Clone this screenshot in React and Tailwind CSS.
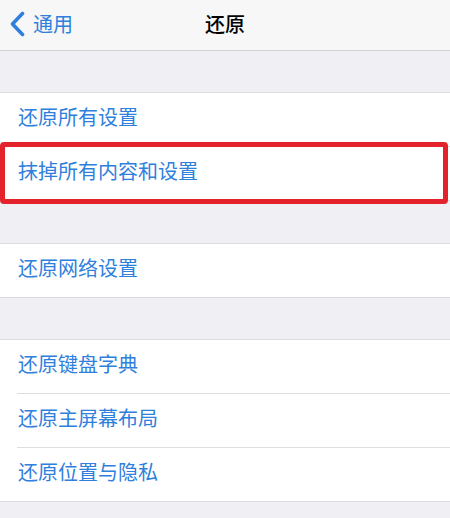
import React from "react";

const font = { fontFamily: '"Noto Sans CJK SC", "Noto Sans", sans-serif' };

function Row({ label, sep }) {
  return (
    <div className="bg-white">
      <div className="h-[53px] flex items-center pl-[18px] pb-[5px] text-[20px] leading-none text-[#2f80dc]">
        {label}
      </div>
      {sep && <div className="ml-[17px] h-px bg-[#dedee2]" />}
    </div>
  );
}

export default function App() {
  return (
    <div className="w-[450px] h-[518px] bg-[#efeff4] overflow-hidden" style={font}>
      <div className="h-[51px] bg-[#f7f7f8] border-b border-[#d4d4d8] relative flex items-center">
        <div className="flex items-center pl-[9px] gap-[8px] text-[#2f80dc] text-[20px] leading-none pb-[2px]">
          <svg width="16" height="26" viewBox="0 0 16 26" fill="none">
            <path d="M13.5 2.5 L3.5 13 L13.5 23.5" stroke="#2f80dc" strokeWidth="3.6" strokeLinecap="round" strokeLinejoin="round" />
          </svg>
          <span>通用</span>
        </div>
        <div className="absolute inset-0 flex items-center justify-center text-[20px] leading-none font-medium text-black pointer-events-none pb-[2px]">
          还原
        </div>
      </div>

      <div className="h-[41px]" />

      <div className="relative border-y border-[#dcdce0] bg-white">
        <Row label="还原所有设置" sep />
        <Row label="抹掉所有内容和设置" />
        <div className="absolute left-0 top-[49px] w-[448px] h-[62px] border-[5px] border-[#e3222b] rounded-[4px]" />
      </div>

      <div className="h-[42px]" />

      <div className="border-y border-[#dcdce0] bg-white">
        <Row label="还原网络设置" />
      </div>

      <div className="h-[41px]" />

      <div className="border-y border-[#dcdce0] bg-white">
        <Row label="还原键盘字典" sep />
        <Row label="还原主屏幕布局" sep />
        <Row label="还原位置与隐私" />
      </div>
    </div>
  );
}
